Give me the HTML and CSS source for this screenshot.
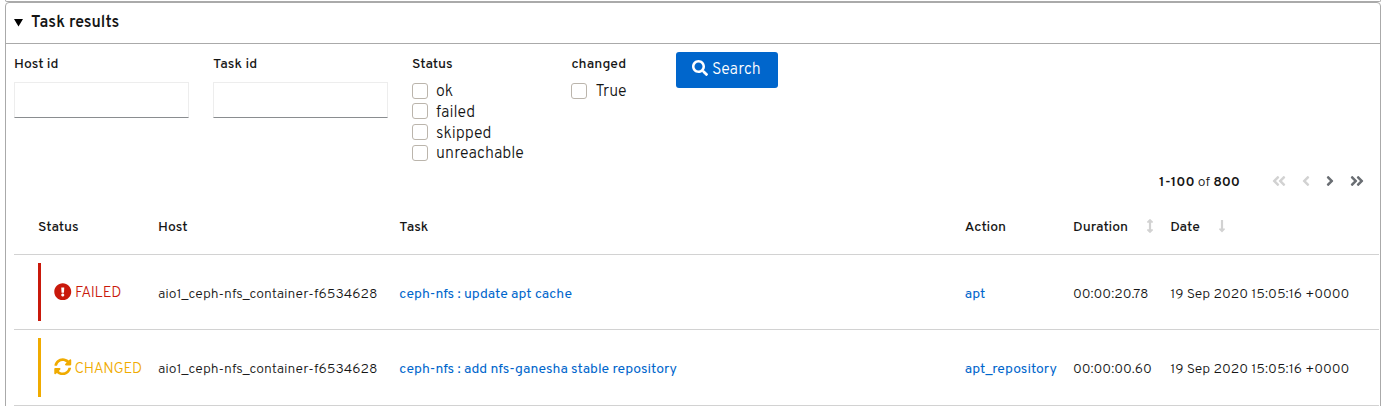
FILE: index.html
```html
<!DOCTYPE html>
<html lang="en">
<head>
<meta charset="utf-8">
<title>Task results</title>
<link rel="stylesheet" href="styles.css">
</head>
<body>
<svg class="defs" width="0" height="0">
  <symbol id="angle" viewBox="0 0 256 512"><path d="M224.3 273l-136 136c-9.4 9.4-24.6 9.4-33.9 0l-22.6-22.6c-9.4-9.4-9.4-24.6 0-33.9l96.4-96.4-96.4-96.4c-9.4-9.4-9.4-24.6 0-33.9L54.3 103c9.4-9.4 24.6-9.4 33.9 0l136 136c9.5 9.4 9.5 24.6.1 34z"/></symbol>
  <symbol id="double-angle" viewBox="0 0 448 512"><path d="M224.3 273l-136 136c-9.4 9.4-24.6 9.4-33.9 0l-22.6-22.6c-9.4-9.4-9.4-24.6 0-33.9l96.4-96.4-96.4-96.4c-9.4-9.4-9.4-24.6 0-33.9L54.3 103c9.4-9.4 24.6-9.4 33.9 0l136 136c9.5 9.4 9.5 24.6.1 34zm192-34l-136-136c-9.4-9.4-24.6-9.4-33.9 0l-22.6 22.6c-9.4 9.4-9.4 24.6 0 33.9l96.4 96.4-96.4 96.4c-9.4 9.4-9.4 24.6 0 33.9l22.6 22.6c9.4 9.4 24.6 9.4 33.9 0l136-136c9.4-9.2 9.4-24.4 0-33.8z"/></symbol>
</svg>
<div class="previous"></div>
<details class="panel" open>
  <summary class="panel-title"><svg class="marker" viewBox="0 0 10 8"><path d="M0 0h9L4.500 7.500z"/></svg><span>Task results</span></summary>
  <form class="filters">
    <div class="field"><label class="label" for="host">Host id</label><input class="text-input" id="host"></div>
    <div class="field"><label class="label" for="task">Task id</label><input class="text-input" id="task"></div>
    <div class="field status-field">
      <span class="label">Status</span>
      <div class="checks">
        <label class="check"><input type="checkbox"><span>ok</span></label>
        <label class="check"><input type="checkbox"><span>failed</span></label>
        <label class="check"><input type="checkbox"><span>skipped</span></label>
        <label class="check"><input type="checkbox"><span>unreachable</span></label>
      </div>
    </div>
    <div class="field changed-field">
      <span class="label">changed</span>
      <div class="checks"><label class="check"><input type="checkbox"><span>True</span></label></div>
    </div>
    <button class="search" type="button"><svg viewBox="0 0 512 512"><path d="M505 442.700L405.300 343c-4.500-4.500-10.600-7-17-7H372c27.600-35.300 44-79.700 44-128C416 93.100 322.900 0 208 0S0 93.100 0 208s93.100 208 208 208c48.300 0 92.700-16.400 128-44v16.300c0 6.400 2.500 12.500 7 17l99.700 99.700c9.400 9.400 24.600 9.400 33.900 0l28.300-28.300c9.400-9.400 9.400-24.600.1-34zM208 336c-70.700 0-128-57.200-128-128 0-70.700 57.200-128 128-128 70.700 0 128 57.200 128 128 0 70.700-57.200 128-128 128z"/></svg><span>Search</span></button>
  </form>
  <nav class="pager">
    <span class="range"><b>1-100</b> of <b>800</b></span>
    <svg class="page double off back"><use href="#double-angle"/></svg>
    <svg class="page single off back"><use href="#angle"/></svg>
    <svg class="page single"><use href="#angle"/></svg>
    <svg class="page double"><use href="#double-angle"/></svg>
  </nav>
  <div class="table">
    <div class="row head">
      <span>Status</span><span>Host</span><span>Task</span><span>Action</span>
      <span class="sortable">Duration<svg class="sort" viewBox="0 0 256 512"><path d="M214.059 377.941H168V134.059h46.059c21.382 0 32.090-25.851 16.971-40.971L144.971 7.029c-9.373-9.373-24.568-9.373-33.941 0L24.971 93.088c-15.119 15.119-4.411 40.971 16.971 40.971H88v243.882H41.941c-21.382 0-32.090 25.851-16.971 40.971l86.059 86.059c9.373 9.373 24.568 9.373 33.941 0l86.059-86.059c15.120-15.119 4.412-40.971-16.970-40.971z"/></svg></span>
      <span class="sortable">Date<svg class="sort" viewBox="0 0 256 512"><path d="M168 345.941V44c0-6.627-5.373-12-12-12h-56c-6.627 0-12 5.373-12 12v301.941H41.941c-21.382 0-32.090 25.851-16.971 40.971l86.059 86.059c9.373 9.373 24.569 9.373 33.941 0l86.059-86.059c15.119-15.119 4.411-40.971-16.971-40.971H168z"/></svg></span>
    </div>
    <div class="row">
      <div class="state failed"><svg viewBox="0 0 512 512"><path d="M504 256c0 136.997-111.043 248-248 248S8 392.997 8 256C8 119.083 119.043 8 256 8s248 111.083 248 248zm-248 50c-25.405 0-46 20.595-46 46s20.595 46 46 46 46-20.595 46-46-20.595-46-46-46zm-43.673-165.346l7.418 136c.347 6.364 5.609 11.346 11.982 11.346h48.546c6.373 0 11.635-4.982 11.982-11.346l7.418-136c.375-6.874-5.098-12.654-11.982-12.654h-63.383c-6.884 0-12.356 5.780-11.981 12.654z"/></svg><span>FAILED</span></div>
      <span>aio1_ceph-nfs_container-f6534628</span>
      <a>ceph-nfs : update apt cache</a>
      <a>apt</a><span>00:00:20.78</span><span>19 Sep 2020 15:05:16 +0000</span>
    </div>
    <div class="row second">
      <div class="state changed"><svg viewBox="0 0 512 512"><path d="M370.720 133.280C339.458 104.008 298.888 87.962 255.848 88c-77.458.068-144.328 53.178-162.791 126.850-1.344 5.363-6.122 9.150-11.651 9.150H24.103c-7.498 0-13.194-6.807-11.807-14.176C33.933 94.924 134.813 8 256 8c66.448 0 126.791 26.136 171.315 68.685L463.030 40.970C478.149 25.851 504 36.559 504 57.941V192c0 13.255-10.745 24-24 24H345.941c-21.382 0-32.090-25.851-16.971-40.971l41.750-41.749zM32 296h134.059c21.382 0 32.090 25.851 16.971 40.971l-41.750 41.750c31.262 29.273 71.835 45.319 114.876 45.280 77.418-.070 144.315-53.144 162.787-126.849 1.344-5.363 6.122-9.150 11.651-9.150h57.304c7.498 0 13.194 6.807 11.807 14.176C478.067 417.076 377.187 504 256 504c-66.448 0-126.791-26.136-171.315-68.685L48.970 471.030C33.851 486.149 8 475.441 8 454.059V320c0-13.255 10.745-24 24-24z"/></svg><span>CHANGED</span></div>
      <span>aio1_ceph-nfs_container-f6534628</span>
      <a>ceph-nfs : add nfs-ganesha stable repository</a>
      <a>apt_repository</a><span>00:00:00.60</span><span>19 Sep 2020 15:05:16 +0000</span>
    </div>
  </div>
</details>
</body>
</html>
```
FILE: styles.css
```css
* { box-sizing: border-box; }
body {
  margin: 0;
  height: 406px;
  overflow: hidden;
  background: #fff;
  color: #151515;
  font-family: Overpass, Roboto, "Open Sans", sans-serif;
  font-size: 14px;
}
.defs { display: none; }
.previous { height: 2px; margin: 0 6px 0 5px; border: 1px solid #aaa; border-top: 0; border-radius: 0 0 4px 4px; }
.panel { margin: 0 6px 0 5px; height: 420px; border: 1px solid #aaa; border-radius: 4px; }
.panel-title {
  display: flex;
  align-items: center;
  gap: 7px;
  height: 41px;
  padding: 0 0 1px 8px;
  border-bottom: 1px solid #aaa;
  font-size: 16px;
  font-weight: 600;
  letter-spacing: .050px;
}
.marker { width: 10px; height: 8px; }
.filters { display: flex; height: 117px; padding: 8px 8px 0; }
.field { width: 175px; margin-right: 24px; flex: none; }
.label { display: block; height: 30px; padding-top: 5px; font-weight: 500; line-height: 16px; }
.text-input {
  display: block;
  width: 175px;
  height: 36px;
  padding: 0 8px;
  border: 1px solid #ededed;
  border-bottom-color: #8a8d90;
  background: #fff;
}
.status-field { width: 135.400px; }
.changed-field { width: 80.600px; }
.checks { display: flex; flex-direction: column; }
.check { display: flex; align-items: center; gap: 8px; height: 20.550px; padding-bottom: 2.750px; font-size: 16px; font-weight: 300; }
.check span { padding-top: 3px; }
.check input { appearance: none; width: 16px; height: 16px; margin: 0; border: 1px solid #bbb5ac; border-radius: 3px; background: #fff; }
.search {
  display: flex;
  align-items: center;
  gap: 4px;
  width: 102px;
  height: 36px;
  padding: 0 0 3px 16px;
  border: 0;
  border-radius: 3px;
  background: #06c;
  color: #fff;
  font: 300 16px Overpass, Roboto, sans-serif;
}
.search svg { width: 16px; height: 16px; margin-top: -1px; fill: currentColor; }
.search span { padding-top: 2px; }
.pager { display: flex; align-items: center; height: 39px; padding: 1px 0 0 1153px; }
.range { width: 113px; padding-top: 3px; font-weight: 300; }
.range b { font-weight: 600; }
.page { height: 16px; fill: #6a6e73; flex: none; }
.double { width: 14px; }
.single { width: 8px; margin-left: 16px; }
.single + .double { margin-left: 16px; }
.off { fill: #d2d2d2; }
.back { transform: scaleX(-1); }
.table { margin: 0 1px 0 8px; }
.row {
  display: grid;
  grid-template-columns: 120px 241.300px 565.500px 108.200px 97.200px 1fr;
  align-items: center;
  height: 75px;
  padding-left: 24px;
  border-bottom: 1px solid #d2d2d2;
  white-space: nowrap;
}
.second { height: 76px; }
.head { height: 55px; }
.row > a { color: #06c; padding-top: 5px; }
.row > span { padding-top: 5px; font-weight: 300; }
.second > a, .second > span { padding-top: 3px; }
.head > span { padding-top: 0; font-weight: 500; }
.sortable { display: flex; align-items: center; gap: 18.500px; }
.sort { width: 8px; height: 14px; margin-top: -2px; fill: #d2d2d2; }
.state { display: flex; align-items: center; gap: 3.500px; height: 58px; padding-left: 13px; border-left: 3px solid; font-size: 15px; font-weight: 300; letter-spacing: -.150px; }
.state span { padding-top: 2px; }
.second .state { gap: 3px; height: 59px; letter-spacing: -.200px; }
.second .state span { padding-top: 3px; }
.state svg { width: 17.500px; height: 17.500px; margin-top: -1px; fill: currentColor; }
.second .state svg { margin-top: -2px; }
.failed { color: #c9190b; }
.changed { color: #f0ab00; }
```
